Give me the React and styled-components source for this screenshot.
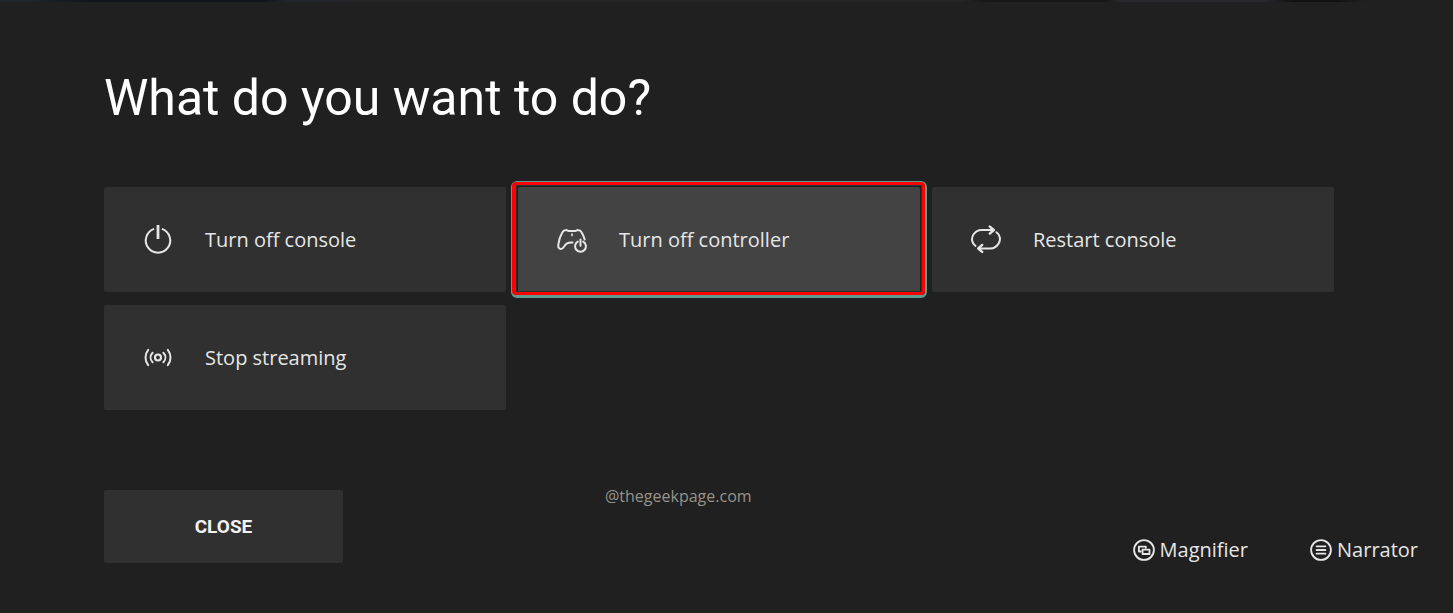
import React from "react";
import styled, { createGlobalStyle } from "styled-components";

const GlobalStyle = createGlobalStyle`
  *, *::before, *::after { box-sizing: border-box; }
  body {
    margin: 0;
    background: #202020;
    color: #e6e6e6;
    font-family: "Open Sans", "Noto Sans", sans-serif;
  }
  button { font: inherit; color: inherit; border: 0; cursor: pointer; }
`;

const Page = styled.div`
  display: flex;
  flex-direction: column;
  min-height: 100vh;
`;

const TopEdge = styled.div`
  height: 2px;
  background: linear-gradient(
    90deg,
    #20262c 0 2%, #12151a 6% 18%, #24262e 20% 22%, #262628 24%,
    #262628 66%, #161616 68% 76%, #28282c 77% 87%, #121214 89% 92%, #202020 94%
  );
`;

const Dialog = styled.main`
  padding: 63px 35px 50px 104px;
`;

const Title = styled.h1`
  margin: 0 0 56px;
  font-family: Roboto, sans-serif;
  font-size: 50px;
  line-height: 66px;
  font-weight: 400;
  color: #ffffff;
`;

const Actions = styled.div`
  display: grid;
  grid-template-columns: repeat(3, 1fr);
  gap: 13px 12px;
  margin-right: 84px;
`;

const Tile = styled.button`
  position: relative;
  display: flex;
  align-items: center;
  gap: 32px;
  height: 105px;
  padding: 0 0 0 39px;
  border-radius: 2px;
  background: ${(p) => (p.$selected ? "#434343" : "#303030")};
  font-size: 20px;
  line-height: 28px;
  text-align: left;

  ${(p) => p.$selected && `
    &::before, &::after {
      content: "";
      position: absolute;
    }
    &::before {
      inset: -6px -7px -6px;
      border: 2px solid #5f9c8c;
      border-bottom-width: 3px;
      border-radius: 6px;
    }
    &::after {
      inset: -5px -5px -3px -6px;
      border: 3px solid #ff0000;
      border-left-width: 4px;
      border-radius: 4px;
      box-shadow: inset 0 0 0 1px #26332f;
    }
  `}
`;

const Icon = styled.svg.attrs({
  viewBox: "0 0 30 30",
  fill: "none",
  stroke: "currentColor",
  strokeWidth: 2,
  strokeLinecap: "round",
  strokeLinejoin: "round",
  "aria-hidden": true,
})`
  flex: none;
  width: ${(p) => p.$size || 30}px;
  height: ${(p) => p.$size || 30}px;
`;

const Footer = styled.footer`
  display: flex;
  align-items: flex-start;
  margin-top: 80px;
`;

const CloseButton = styled.button`
  width: 239px;
  height: 73px;
  border-radius: 2px;
  background: #303030;
  && {
    font-family: Roboto, sans-serif;
    font-size: 19px;
    font-weight: 700;
    color: #f2f2f2;
  }
`;

const Credit = styled.span`
  margin-left: 262px;
  font-size: 16px;
  line-height: 12px;
  color: #96938a;
`;

const Tools = styled.nav`
  display: flex;
  align-self: flex-end;
  gap: 62px;
  margin-left: auto;
`;

const Tool = styled.button`
  display: flex;
  align-items: center;
  gap: 5px;
  padding: 0;
  background: none;
  && {
    font-size: 20px;
    line-height: 26px;
  }
`;

const PowerIcon = () => (
  <Icon>
    <path d="M11.2 3.9a12.2 12.2 0 1 0 7.6 0" strokeLinecap="butt" />
    <path d="M15 0v14" strokeWidth="2.8" strokeLinecap="butt" />
  </Icon>
);

const ControllerIcon = () => (
  <Icon>
    <path d="M15.500 17.600c-3.600-.4-6.300.5-8 3.400-.9 1.500-1.800 3-3.500 3-2.200 0-3-1.900-2.700-4.500C1.900 15 3.500 10.500 5.400 7.300 6.200 5.800 7.500 5 9.200 5c.8 0 1.300.9 2.300.9h7C19.500 5.900 20 5 20.800 5c1.700 0 3 .8 3.800 2.300 1.200 2 2.300 4.700 3.100 7.200" />
    <path d="M15 9v1.600" strokeWidth="1.600" />
    <path d="M20.800 16.600a5.400 5.400 0 1 0 5.400 0" />
    <path d="M23.500 14.500v6.200" />
  </Icon>
);

const RestartIcon = () => (
  <Icon>
    <path d="M4.500 21C1 18.500-.2 13.400 2.600 9.300 4.400 6.600 7.300 5 10.500 5H22" />
    <path d="M18.800 1.600L22.800 5l-4 3.600" strokeWidth="2.400" />
    <path d="M25.500 7.200c3.500 2.500 4.700 7.600 1.900 11.700-1.800 2.700-4.700 4.600-7.900 4.600H8" />
    <path d="M11.200 19.900l-4 3.600 4 3.400" strokeWidth="2.400" />
  </Icon>
);

const StreamIcon = () => (
  <Icon>
    <circle cx="15" cy="14.500" r="3" strokeWidth="2.200" />
    <path d="M9.600 9.700c-2.600 2.800-2.600 6.800 0 9.600M20.400 9.700c2.600 2.800 2.600 6.800 0 9.600" />
    <path d="M5.200 6.800c-3.600 4.600-3.600 10.800 0 15.400M24.800 6.800c3.600 4.600 3.600 10.800 0 15.400" />
  </Icon>
);

const MagnifierIcon = () => (
  <Icon $size={22}>
    <circle cx="15" cy="15" r="13.500" strokeWidth="2.500" />
    <path d="M10.500 17H8v-6.500h9.500V12" strokeWidth="2.500" />
    <rect x="13" y="14.500" width="9.500" height="6" strokeWidth="2.500" />
  </Icon>
);

const NarratorIcon = () => (
  <Icon $size={22}>
    <circle cx="15" cy="15" r="13.500" strokeWidth="2.500" />
    <path d="M9 10h12M9 15h12M9 20h12" strokeWidth="2.500" />
  </Icon>
);

const actions = [
  { label: "Turn off console", Glyph: PowerIcon },
  { label: "Turn off controller", Glyph: ControllerIcon, selected: true },
  { label: "Restart console", Glyph: RestartIcon },
  { label: "Stop streaming", Glyph: StreamIcon },
];

export default function App() {
  return (
    <Page>
      <GlobalStyle />
      <TopEdge />
      <Dialog>
        <Title>What do you want to do?</Title>
        <Actions>
          {actions.map(({ label, Glyph, selected }) => (
            <Tile key={label} type="button" $selected={selected}>
              <Glyph />
              {label}
            </Tile>
          ))}
        </Actions>
        <Footer>
          <CloseButton type="button">CLOSE</CloseButton>
          <Credit>@thegeekpage.com</Credit>
          <Tools>
            <Tool type="button"><MagnifierIcon />Magnifier</Tool>
            <Tool type="button"><NarratorIcon />Narrator</Tool>
          </Tools>
        </Footer>
      </Dialog>
    </Page>
  );
}
